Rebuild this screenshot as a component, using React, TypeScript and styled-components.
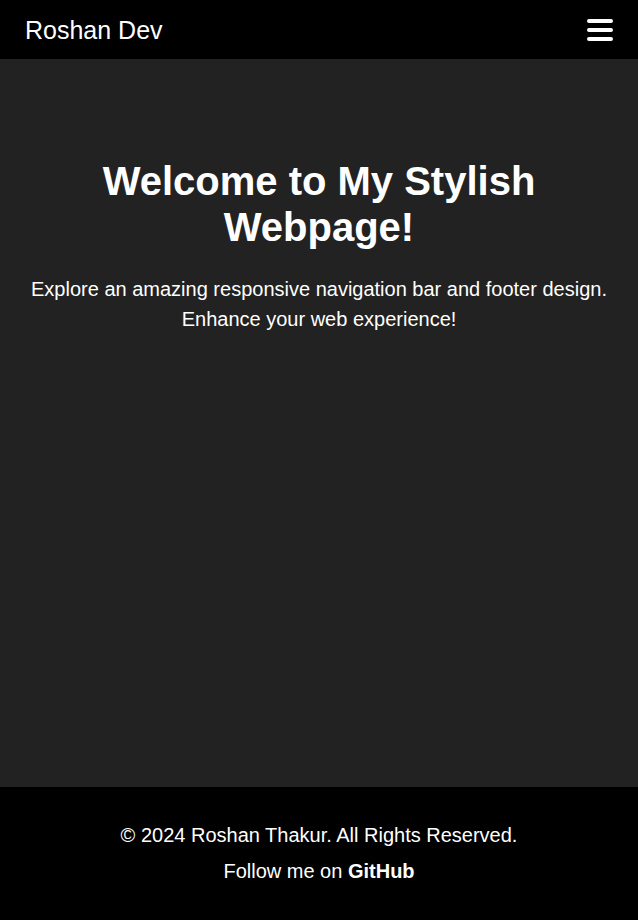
import React from "react";
import styled, { createGlobalStyle } from "styled-components";

const GlobalStyle = createGlobalStyle`
  html, body {
    margin: 0;
    padding: 0;
    background: #222222;
  }
  body {
    font-family: "Liberation Sans", Arial, sans-serif;
    color: #ffffff;
  }
  * { box-sizing: border-box; }
`;

const Page = styled.div`
  min-height: 100vh;
  display: flex;
  flex-direction: column;
`;

const NavBar = styled.nav`
  height: 59px;
  background: #000000;
  display: flex;
  align-items: center;
  justify-content: space-between;
  padding: 0 25px 0 25px;
`;

const Logo = styled.div`
  font-size: 25px;
  line-height: 28px;
  color: #ffffff;
  margin-top: 1px;
`;

const MenuButton = styled.button`
  background: none;
  border: none;
  padding: 0;
  margin: 0;
  width: 26px;
  height: 22px;
  display: flex;
  cursor: pointer;
`;

const Main = styled.main`
  flex: 1;
  padding: 99px 20px 0 20px;
  text-align: center;
  display: flex;
  flex-direction: column;
  gap: 24px;
`;

const Title = styled.h1`
  margin: 0;
  font-size: 40px;
  line-height: 46px;
  font-weight: 700;
`;

const Lead = styled.p`
  margin: 0;
  font-size: 20px;
  line-height: 30px;
`;

const Footer = styled.footer`
  background: #000000;
  padding: 37px 20px 37px 20px;
  text-align: center;
  display: flex;
  flex-direction: column;
  gap: 13px;
`;

const FooterLine = styled.p`
  margin: 0;
  font-size: 20px;
  line-height: 23px;
`;

const GitLink = styled.a`
  color: #ffffff;
  font-weight: 700;
  text-decoration: none;
`;

const BarsIcon = () => (
  <svg width="26" height="22" viewBox="0 0 26 22" fill="#ffffff" aria-hidden="true">
    <rect x="0" y="0" width="26" height="4" rx="2" />
    <rect x="0" y="9" width="26" height="4" rx="2" />
    <rect x="0" y="18" width="26" height="4" rx="2" />
  </svg>
);

export default function App() {
  return (
    <>
      <GlobalStyle />
      <Page>
        <NavBar>
          <Logo>Roshan Dev</Logo>
          <MenuButton aria-label="Menu">
            <BarsIcon />
          </MenuButton>
        </NavBar>
        <Main>
          <Title>Welcome to My Stylish Webpage!</Title>
          <Lead>
            Explore an amazing responsive navigation bar and footer design. Enhance your web experience!
          </Lead>
        </Main>
        <Footer>
          <FooterLine>© 2024 Roshan Thakur. All Rights Reserved.</FooterLine>
          <FooterLine>
            Follow me on <GitLink href="#">GitHub</GitLink>
          </FooterLine>
        </Footer>
      </Page>
    </>
  );
}
